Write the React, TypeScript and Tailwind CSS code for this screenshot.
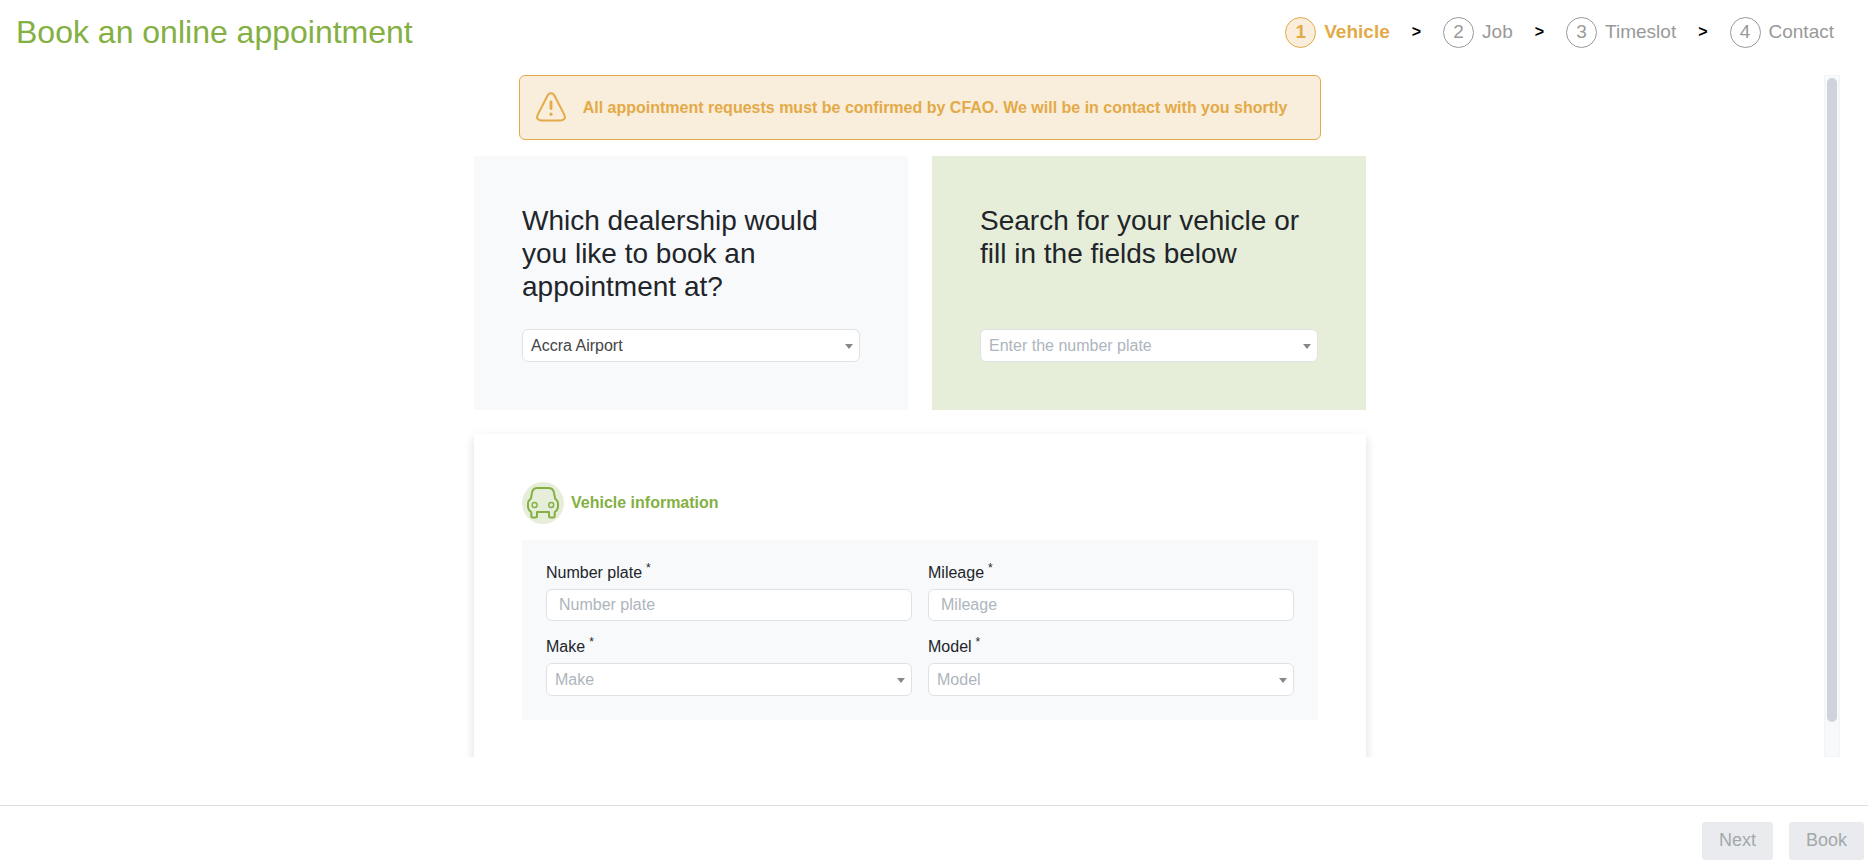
import React, { useState } from 'react';
import { clsx } from 'clsx';

const steps = ['Vehicle', 'Job', 'Timeslot', 'Contact'];

function WarningIcon() {
  return (
    <svg viewBox="0 0 30 32" className="w-[30px] h-8 shrink-0" fill="none" stroke="currentColor" strokeWidth="2" aria-hidden="true">
      <path d="M11.7 3.2 1.9 22.4C0 26 1.6 28.4 5.2 28.4H24.8C28.4 28.4 30 26 28.1 22.4L18.3 3.2C16.8 0.6 13.2 0.6 11.7 3.2Z" />
      <path d="M15 10V16.6" strokeWidth="2.8" strokeLinecap="round" />
      <circle cx="15" cy="22.2" r="1.6" fill="currentColor" stroke="none" />
    </svg>
  );
}

function CarIcon() {
  return (
    <svg viewBox="0 0 42 42" className="w-[42px] h-[42px]" fill="none" stroke="#84b043" strokeWidth="2" strokeLinejoin="round" aria-hidden="true">
      <circle cx="21" cy="21" r="21" fill="#e6eeda" stroke="none" />
      <path d="M15.5 6.1H26.5C29.6 6.1 31.3 7.6 31.9 10.4L33 16C33.1 16.7 33.6 17.2 34.2 17.6C35.5 18.5 36 19.8 36 21.4V24.5C36 26.8 35 28.6 32.7 30.2V34.2C32.7 35.2 32.2 35.6 31.3 35.6H28.4C27.4 35.6 27 35.1 27 34.2V30H15V34.2C15 35.1 14.6 35.6 13.6 35.6H10.7C9.8 35.6 9.3 35.2 9.3 34.2V30.2C7 28.6 6 26.8 6 24.5V21.4C6 19.8 6.5 18.5 7.8 17.6C8.4 17.2 8.9 16.7 9 16L10.1 10.4C10.7 7.6 12.4 6.1 15.5 6.1Z" />
      <circle cx="12.6" cy="23" r="2.5" strokeWidth="1.4" />
      <circle cx="29.2" cy="23" r="2.5" strokeWidth="1.4" />
    </svg>
  );
}

type SelectProps = {
  id: string;
  value: string;
  onChange: (value: string) => void;
  options?: string[];
  placeholder?: string;
};

function Select({ id, value, onChange, options = [], placeholder }: SelectProps) {
  return (
    <div className="relative">
      <select
        id={id}
        value={value}
        onChange={(e) => onChange(e.target.value)}
        className={clsx(
          'block w-full h-[33px] appearance-none rounded-md border border-[#dee2e6] bg-white pl-2 pr-6 text-base leading-6 outline-none focus:border-[#84b043]',
          value ? 'text-[#444444]' : 'text-[#adb5bd]'
        )}
      >
        {placeholder && <option value="">{placeholder}</option>}
        {options.map((option) => (
          <option key={option} value={option}>{option}</option>
        ))}
      </select>
      <svg viewBox="0 0 8 5" className="pointer-events-none absolute right-[7px] top-[15px] w-2 h-[5px]" aria-hidden="true">
        <path d="M0 0H8L4 5Z" fill="#888888" />
      </svg>
    </div>
  );
}

function Field({ id, label, children }: { id: string; label: string; children: React.ReactNode }) {
  return (
    <div>
      <label htmlFor={id} className="flex items-start gap-1 h-[25px] text-base leading-[18px] text-[#212529]">
        {label}
        <span className="-mt-1 text-xs leading-4">*</span>
      </label>
      {children}
    </div>
  );
}

const inputClass =
  'block w-full h-8 rounded-md border border-[#dee2e6] bg-white px-3 text-base leading-6 text-[#444444] placeholder:text-[#adb5bd] outline-none focus:border-[#84b043]';

const buttonClass = 'h-[38px] rounded-[3px] bg-[#e9ebef] px-[17px] pb-0.5 text-lg leading-6 text-[#a3a8ab]';

export default function App() {
  const [dealership, setDealership] = useState('Accra Airport');
  const [search, setSearch] = useState('');
  const [plate, setPlate] = useState('');
  const [mileage, setMileage] = useState('');
  const [make, setMake] = useState('');
  const [model, setModel] = useState('');
  const currentStep = 0;

  return (
    <div className="h-screen flex flex-col bg-white font-['Liberation_Sans',Arial,sans-serif] text-[#212529]">
      <header className="flex items-center justify-between pl-4 pr-[34px] h-16 shrink-0">
        <h1 className="text-[32px] leading-10 text-[#84b043]">Book an online appointment</h1>
        <ol className="flex items-center gap-[22px] text-[19px] leading-6">
          {steps.map((step, i) => (
            <React.Fragment key={step}>
              {i > 0 && <li aria-hidden="true" className="text-base font-bold text-black">&gt;</li>}
              <li
                aria-current={i === currentStep ? 'step' : undefined}
                className={clsx('flex items-center gap-2', i === currentStep ? 'font-bold text-[#e3aa47]' : 'text-[#999999]')}
              >
                <span
                  className={clsx(
                    'flex items-center justify-center w-[31px] h-[31px] rounded-full border',
                    i === currentStep ? 'border-[#e3aa47] bg-[#f9eddb]' : 'border-[#999999]'
                  )}
                >
                  {i + 1}
                </span>
                {step}
              </li>
            </React.Fragment>
          ))}
        </ol>
      </header>

      <main className="flex flex-1 min-h-0 mt-[11px] mb-12 pl-4 pr-7">
        <div className="flex-1 overflow-y-auto [scrollbar-width:none]">
          <div className="mx-auto max-w-[892px]">
            <div role="alert" className="mx-auto flex items-center gap-[17px] w-fit h-[65px] rounded-md border border-[#e3aa47] bg-[#f9eddb] pl-4 pr-[33px] font-bold text-[#e3aa47]">
              <WarningIcon />
              <p className="text-base leading-6">All appointment requests must be confirmed by CFAO. We will be in contact with you shortly</p>
            </div>

            <div className="mt-4 grid grid-cols-2 gap-6">
              <section className="flex flex-col justify-between min-h-[254px] bg-[#f8f9fb] p-12">
                <label htmlFor="dealership" className="text-[28px] leading-[33px]">
                  Which dealership would you like to book an appointment at?
                </label>
                <Select id="dealership" value={dealership} onChange={setDealership} options={['Accra Airport']} />
              </section>
              <section className="flex flex-col justify-between min-h-[254px] bg-[#e6eeda] p-12">
                <label htmlFor="search" className="text-[28px] leading-[33px]">
                  Search for your vehicle or fill in the fields below
                </label>
                <Select id="search" value={search} onChange={setSearch} placeholder="Enter the number plate" />
              </section>
            </div>

            <section className="mt-6 bg-white p-12 pb-24 shadow-[0_4px_10px_rgba(0,0,0,0.14)]">
              <div className="flex items-center gap-[7px]">
                <CarIcon />
                <h2 className="text-base leading-6 font-bold text-[#84b043]">Vehicle information</h2>
              </div>
              <div className="mt-4 grid grid-cols-2 gap-x-4 gap-y-[17px] bg-[#f8f9fb] p-6">
                <Field id="plate" label="Number plate">
                  <input id="plate" type="text" required value={plate} onChange={(e) => setPlate(e.target.value)} placeholder="Number plate" className={inputClass} />
                </Field>
                <Field id="mileage" label="Mileage">
                  <input id="mileage" type="text" required value={mileage} onChange={(e) => setMileage(e.target.value)} placeholder="Mileage" className={inputClass} />
                </Field>
                <Field id="make" label="Make">
                  <Select id="make" value={make} onChange={setMake} placeholder="Make" />
                </Field>
                <Field id="model" label="Model">
                  <Select id="model" value={model} onChange={setModel} placeholder="Model" />
                </Field>
              </div>
            </section>
          </div>
        </div>
        {/* scroll track */}
        <div aria-hidden="true" className="w-4 border border-[#f3f4f6] bg-[#f8f9fb] px-0.5 pt-0.5">
          <div className="h-[95%] w-[10px] rounded-full bg-[#ced4da]" />
        </div>
      </main>

      <footer className="flex justify-end gap-4 border-t border-[#dddfe1] pt-4 pr-1 pb-[3px]">
        <button type="button" disabled className={buttonClass}>Next</button>
        <button type="button" disabled className={buttonClass}>Book</button>
      </footer>
    </div>
  );
}
